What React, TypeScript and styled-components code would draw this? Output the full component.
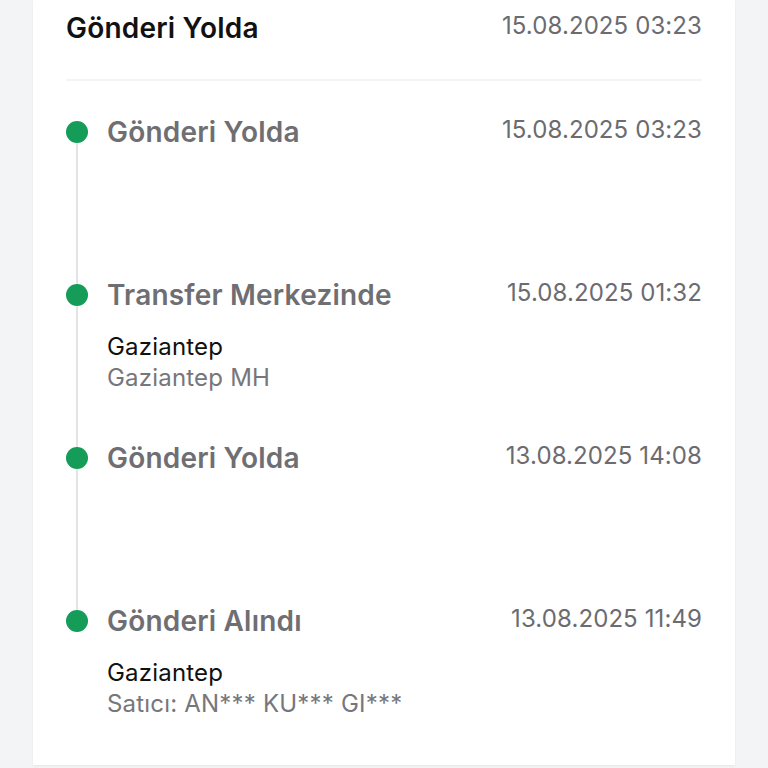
import styled, { createGlobalStyle } from 'styled-components';

type TrackingEvent = {
    title: string;
    date: string;
    location?: string;
    detail?: string;
};

const events: TrackingEvent[] = [
    { title: 'Gönderi Yolda', date: '15.08.2025 03:23' },
    {
        title: 'Transfer Merkezinde',
        date: '15.08.2025 01:32',
        location: 'Gaziantep',
        detail: 'Gaziantep MH',
    },
    { title: 'Gönderi Yolda', date: '13.08.2025 14:08' },
    {
        title: 'Gönderi Alındı',
        date: '13.08.2025 11:49',
        location: 'Gaziantep',
        detail: 'Satıcı: AN*** KU*** GI***',
    },
];

const App = () => {
    return (
        <>
            <GlobalStyle />
            <Page>
                <Card>
                    <Header>
                        <HeaderTitle>Gönderi Yolda</HeaderTitle>
                        <HeaderDate>15.08.2025 03:23</HeaderDate>
                    </Header>
                    <Divider />

                    <Timeline>
                        {events.map((event, index) => {
                            const isLast = index === events.length - 1;
                            return (
                                <Item key={index} $last={isLast}>
                                    <Dot />
                                    <TitleRow>
                                        <EventTitle>{event.title}</EventTitle>
                                        <EventDate>{event.date}</EventDate>
                                    </TitleRow>
                                    {!isLast && <Line />}
                                    {event.location && (
                                        <Body>
                                            <Location>{event.location}</Location>
                                            <Detail>{event.detail}</Detail>
                                        </Body>
                                    )}
                                </Item>
                            );
                        })}
                    </Timeline>
                </Card>
            </Page>
        </>
    );
};

const GlobalStyle = createGlobalStyle`
    * {
        box-sizing: border-box;
    }

    body {
        margin: 0;
        background-color: #f3f4f6;
        font-family: Inter, 'Noto Sans', sans-serif;
    }
`;

const Page = styled.div`
    width: 768px;
    height: 768px;
    overflow: hidden;
    padding: 0 33px;
`;

const Card = styled.div`
    background-color: white;
    padding: 0 33px 46px 33px;
    box-shadow: 0 1px 2px rgba(0, 0, 0, 0.06);
`;

const Header = styled.div`
    height: 56px;
    display: flex;
    justify-content: space-between;
    align-items: center;
`;

const HeaderTitle = styled.h2`
    margin: 0;
    font-size: 28px;
    font-weight: 600;
    letter-spacing: 0.2px;
    color: #111;
`;

const HeaderDate = styled.span`
    font-size: 24px;
    letter-spacing: 0.1px;
    color: #6b6b70;
    margin-top: -6px;
`;

const Divider = styled.hr`
    margin: 23px 0 0 0;
    border: none;
    height: 2px;
    background-color: #f4f4f6;
`;

const Timeline = styled.ol`
    list-style: none;
    margin: 0;
    padding: 40px 0 0 0;
`;

const Item = styled.li<{ $last: boolean }>`
    display: grid;
    grid-template-columns: 22px 1fr;
    grid-template-rows: 22px 1fr;
    column-gap: 19px;
    min-height: ${({ $last }) => ($last ? 'auto' : '163px')};
`;

const Dot = styled.span`
    grid-row: 1;
    grid-column: 1;
    width: 22px;
    height: 22px;
    border-radius: 50%;
    background-color: #149c58;
`;

const Line = styled.span`
    grid-row: 2;
    grid-column: 1;
    justify-self: center;
    width: 2px;
    background-color: #e4e4e7;
`;

const TitleRow = styled.div`
    grid-row: 1;
    grid-column: 2;
    display: flex;
    justify-content: space-between;
    align-items: center;
    line-height: 22px;
`;

const EventTitle = styled.span`
    font-size: 28px;
    font-weight: 600;
    letter-spacing: 0.2px;
    color: #6e6e73;
`;

const EventDate = styled.span`
    font-size: 24px;
    letter-spacing: 0.1px;
    color: #6b6b70;
    margin-top: -4px;
`;

const Body = styled.div`
    grid-row: 2;
    grid-column: 2;
    display: flex;
    flex-direction: column;
    padding-top: 25px;
    font-size: 24px;
    letter-spacing: 0.2px;
    line-height: 31px;
`;

const Location = styled.span`
    color: #111;
`;

const Detail = styled.span`
    color: #76767b;
`;

export default App;
